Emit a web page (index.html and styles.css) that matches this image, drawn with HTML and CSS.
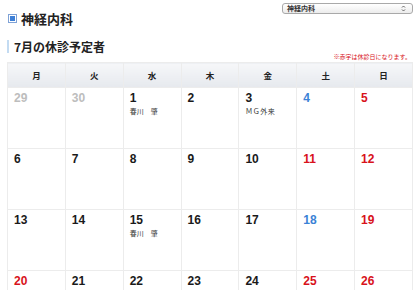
FILE: index.html
```html
<!DOCTYPE html>
<html lang="ja">
<head>
<meta charset="utf-8">
<link rel="stylesheet" href="styles.css">
</head>
<body>
<div class="top">
  <div class="select">
    <span>神経内科</span>
    <svg class="arrows" width="5" height="7" viewBox="0 0 5 7"><path d="M1 2.5 L2.5 1 L4 2.5 M1 4.5 L2.5 6 L4 4.5" fill="none" stroke="#555" stroke-width="0.9"/></svg>
  </div>
  <h1 class="dept"><span class="sq"></span>神経内科</h1>
</div>
<h2 class="month">7月の休診予定者</h2>
<p class="note">※赤字は休診日になります。</p>
<table class="cal">
  <thead>
    <tr><th>月</th><th>火</th><th>水</th><th>木</th><th>金</th><th>土</th><th>日</th></tr>
  </thead>
  <tbody>
    <tr>
      <td><span class="d gray">29</span></td>
      <td><span class="d gray">30</span></td>
      <td><span class="d">1</span><span class="who">春川　肇</span></td>
      <td><span class="d">2</span></td>
      <td><span class="d">3</span><span class="who wide">ＭＧ外来</span></td>
      <td><span class="d blue">4</span></td>
      <td><span class="d red">5</span></td>
    </tr>
    <tr>
      <td><span class="d">6</span></td>
      <td><span class="d">7</span></td>
      <td><span class="d">8</span></td>
      <td><span class="d">9</span></td>
      <td><span class="d">10</span></td>
      <td><span class="d red">11</span></td>
      <td><span class="d red">12</span></td>
    </tr>
    <tr>
      <td><span class="d">13</span></td>
      <td><span class="d">14</span></td>
      <td><span class="d">15</span><span class="who">春川　肇</span></td>
      <td><span class="d">16</span></td>
      <td><span class="d">17</span></td>
      <td><span class="d blue">18</span></td>
      <td><span class="d red">19</span></td>
    </tr>
    <tr>
      <td><span class="d red">20</span></td>
      <td><span class="d">21</span></td>
      <td><span class="d">22</span></td>
      <td><span class="d">23</span></td>
      <td><span class="d">24</span></td>
      <td><span class="d red">25</span></td>
      <td><span class="d red">26</span></td>
    </tr>
  </tbody>
</table>
</body>
</html>
```
FILE: styles.css
```css
html, body {
  margin: 0;
  padding: 0;
  background: #fff;
}
body {
  font-family: "Noto Sans CJK JP", "Liberation Sans", sans-serif;
  color: #222;
}
.top {
  display: grid;
  padding: 3px 7px 0 8px;
}
.select {
  justify-self: end;
  width: 119px;
  height: 9px;
  border: 1px solid #a9a9a9;
  border-radius: 3px;
  background: linear-gradient(#ffffff, #ececec);
  display: flex;
  align-items: center;
  justify-content: space-between;
  padding: 0 6px 0 4px;
  box-sizing: content-box;
  font-size: 7px;
  font-weight: bold;
  color: #333;
  line-height: 9px;
}
.arrows {
  display: block;
}
.dept {
  margin: -3px 0 0 0;
  display: flex;
  align-items: center;
  gap: 4px;
  font-size: 13px;
  line-height: 15px;
  font-weight: bold;
  color: #222;
}
.sq {
  width: 5px;
  height: 5px;
  border: 1px solid #7fa2d6;
  background: #3d7fd6;
  box-shadow: 0 0 0 1px #fff inset;
  padding: 1px;
  background-clip: content-box;
}
.month {
  margin: 14px 0 0 7px;
  padding-left: 5px;
  border-left: 2px solid #c3dbf2;
  font-size: 12px;
  line-height: 13px;
  font-weight: bold;
  color: #222;
}
.note {
  margin: 0 9px 0 0;
  text-align: right;
  font-size: 6px;
  line-height: 8px;
  color: #d8121b;
}
.cal {
  margin: 1px 0 0 7px;
  width: 406px;
  border-collapse: collapse;
  table-layout: fixed;
}
.cal th, .cal td {
  border: 1px solid #ececec;
}
.cal th {
  height: 24px;
  padding: 0;
  background: linear-gradient(#f6f7f9, #e6e9ee);
  font-size: 8.5px;
  font-weight: bold;
  color: #222;
  text-align: center;
  vertical-align: middle;
}
.cal td {
  height: 61px;
  padding: 3px 5px 0 6px;
  vertical-align: top;
  box-sizing: border-box;
}
.d {
  display: block;
  font-family: "Liberation Sans", Arial, sans-serif;
  font-weight: bold;
  font-size: 12px;
  line-height: 14px;
  color: #1a1a1a;
}
.d.gray { color: #bdbdbd; }
.d.blue { color: #3b82d6; }
.d.red { color: #d8121b; }
.who {
  display: block;
  margin-top: 2px;
  font-size: 7px;
  line-height: 9px;
  color: #333;
}
.who.wide {
  letter-spacing: 0.5px;
}
```
